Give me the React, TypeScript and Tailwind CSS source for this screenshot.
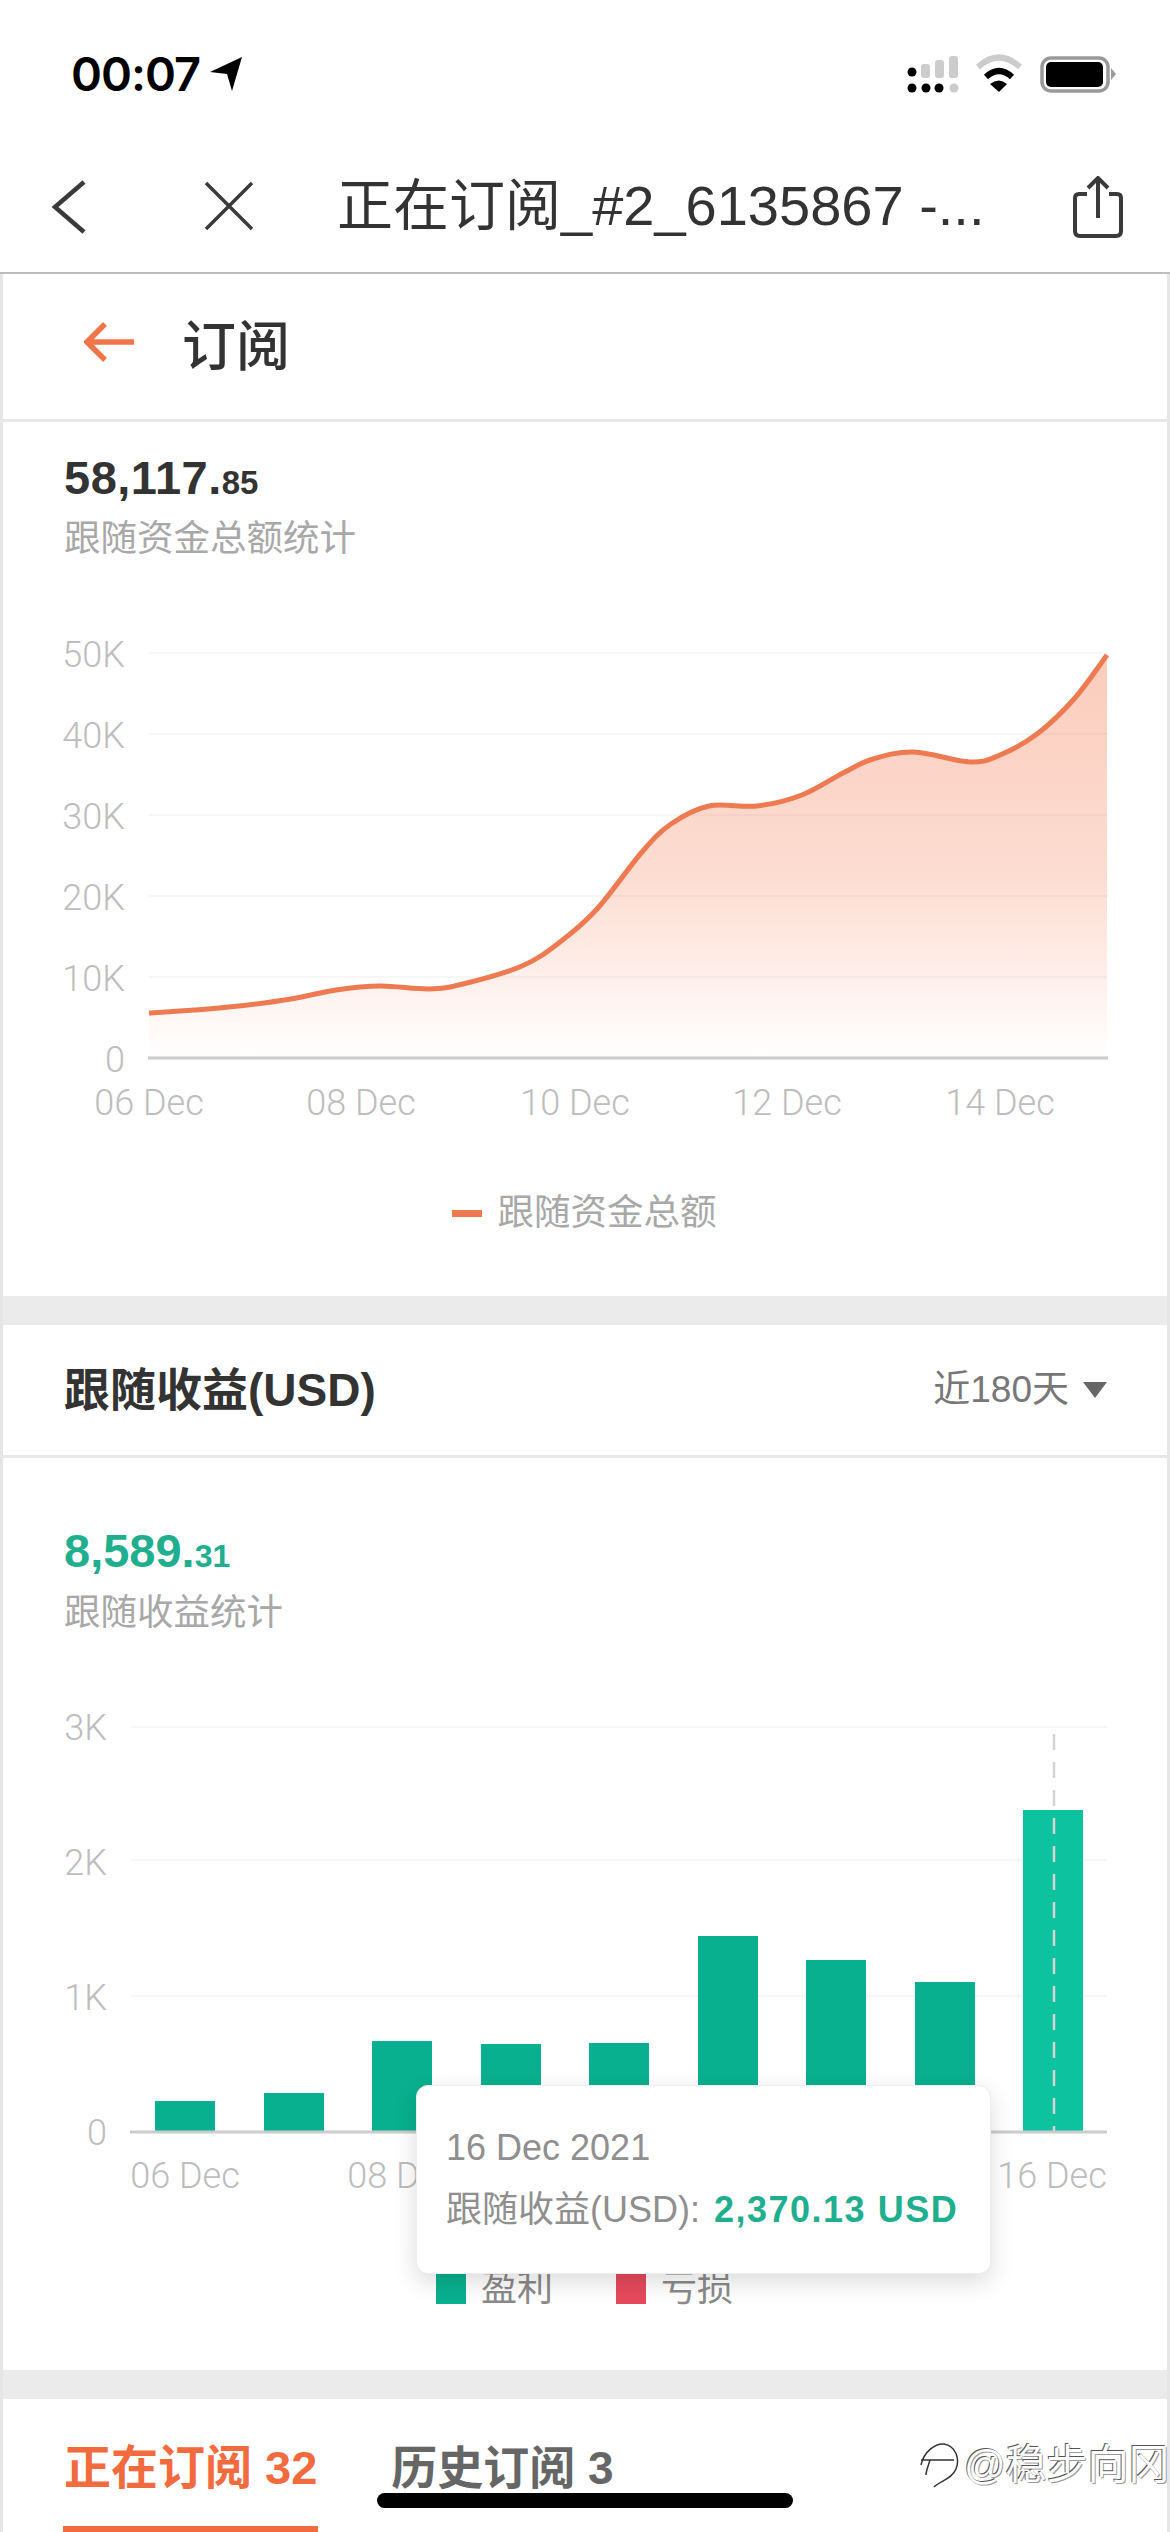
const sans = "font-['Liberation_Sans','Noto_Sans_CJK_SC',sans-serif]"

// curve points of the first chart, in page pixels
const curve: [number, number][] = [
  [149, 1012], [194, 1009], [239, 1005], [291, 998], [336, 989], [380, 985], [429, 988], [463, 983],
  [522, 965], [560, 941], [597, 908], [642, 851], [671, 823], [709, 805], [757, 805],
  [802, 794], [843, 772], [873, 758], [914, 751], [970, 761], [1000, 754], [1037, 733], [1074, 698], [1107, 654],
]

function smooth(pts: [number, number][]) {
  let d = `M${pts[0][0]} ${pts[0][1]}`
  for (let i = 0; i < pts.length - 1; i++) {
    const p0 = pts[i - 1] || pts[i]
    const p1 = pts[i]
    const p2 = pts[i + 1]
    const p3 = pts[i + 2] || p2
    const c1x = p1[0] + (p2[0] - p0[0]) / 6
    const c1y = p1[1] + (p2[1] - p0[1]) / 6
    const c2x = p2[0] - (p3[0] - p1[0]) / 6
    const c2y = p2[1] - (p3[1] - p1[1]) / 6
    d += ` C${c1x} ${c1y} ${c2x} ${c2y} ${p2[0]} ${p2[1]}`
  }
  return d
}

const linePath = smooth(curve)
const axisFont = { fontFamily: 'Roboto, sans-serif', fontWeight: 300, fontSize: 36, fill: '#bdbdbd' }

const bars = [
  { x: 155, top: 2101 },
  { x: 264, top: 2093 },
  { x: 372, top: 2041 },
  { x: 481, top: 2044 },
  { x: 589, top: 2043 },
  { x: 698, top: 1936 },
  { x: 806, top: 1960 },
  { x: 915, top: 1982 },
]

function StatusIcons() {
  return (
    <svg width="210" height="40" viewBox="906 54 210 40">
      <circle cx="912" cy="72" r="4.5" fill="#000" />
      <rect x="921" y="64" width="9" height="14" rx="3" fill="#ccc" />
      <rect x="935" y="60" width="9" height="18" rx="3" fill="#ccc" />
      <rect x="949" y="56" width="9" height="22" rx="3" fill="#ccc" />
      <circle cx="912" cy="88" r="4.5" fill="#000" />
      <circle cx="926" cy="88" r="4.5" fill="#000" />
      <circle cx="939" cy="88" r="4.5" fill="#000" />
      <circle cx="954" cy="88" r="4.5" fill="#ccc" />
      <path d="M978 67 Q999 48 1020 67" fill="none" stroke="#ccc" strokeWidth="6" />
      <path d="M986 77 Q999 65 1012 77" fill="none" stroke="#000" strokeWidth="6" />
      <path d="M990 84 Q999 77 1007 84 L999 92 Z" fill="#000" />
      <rect x="1042" y="58" width="66" height="33" rx="9" fill="none" stroke="#999" strokeWidth="3.5" />
      <rect x="1046" y="62" width="57" height="25" rx="5" fill="#000" />
      <path d="M1111 68 L1116 74 L1111 80 Z" fill="#999" />
    </svg>
  )
}

function FundChart() {
  return (
    <svg className="block" width="1164" height="540" viewBox="3 620 1164 540">
      <defs>
        <linearGradient id="fundFill" x1="0" y1="654" x2="0" y2="1057" gradientUnits="userSpaceOnUse">
          <stop offset="0" stopColor="#f47a50" stopOpacity="0.38" />
          <stop offset="0.55" stopColor="#f47a50" stopOpacity="0.26" />
          <stop offset="1" stopColor="#f47a50" stopOpacity="0" />
        </linearGradient>
      </defs>
      {[652, 733, 814, 895, 976].map((y) => (
        <line key={y} x1="149" x2="1107" y1={y} y2={y} stroke="#f6f6f6" strokeWidth="2" />
      ))}
      <path d={`${linePath} L1107 1057 L149 1057 Z`} fill="url(#fundFill)" />
      <path d={linePath} fill="none" stroke="#ee7a52" strokeWidth="5" />
      <line x1="148" x2="1108" y1="1057" y2="1057" stroke="#cccccc" strokeWidth="3" />
      {['50K', '40K', '30K', '20K', '10K', '0'].map((t, i) => (
        <text key={t} x="125" y={666 + i * 81} textAnchor="end" {...axisFont}>{t}</text>
      ))}
      {[['06 Dec', 149], ['08 Dec', 361], ['10 Dec', 575], ['12 Dec', 787], ['14 Dec', 1000]].map(([t, x]) => (
        <text key={t} x={x} y="1114" textAnchor="middle" {...axisFont}>{t}</text>
      ))}
    </svg>
  )
}

function ProfitChart() {
  return (
    <svg className="block" width="1164" height="540" viewBox="3 1690 1164 540">
      {[1727, 1860, 1996].map((y) => (
        <line key={y} x1="131" x2="1107" y1={y} y2={y} stroke="#f6f6f6" strokeWidth="2" />
      ))}
      {bars.map((b) => (
        <rect key={b.x} x={b.x} y={b.top} width="60" height={2131 - b.top} fill="#09b08f" />
      ))}
      <rect x="1023" y="1810" width="60" height="321" fill="#0cc29f" />
      <line x1="130" x2="1107" y1="2132" y2="2132" stroke="#cccccc" strokeWidth="3" />
      <line x1="1054" x2="1054" y1="1734" y2="2131" stroke="#d4d4d4" strokeWidth="2.5" strokeDasharray="16 12" />
      {['3K', '2K', '1K', '0'].map((t, i) => (
        <text key={t} x="107" y={1740 + i * 135} textAnchor="end" {...axisFont}>{t}</text>
      ))}
      {[['06 Dec', 185], ['08 Dec', 402], ['16 Dec', 1052]].map(([t, x]) => (
        <text key={t} x={x} y="2188" textAnchor="middle" {...axisFont}>{t}</text>
      ))}
    </svg>
  )
}

export default function App() {
  return (
    <div className={`relative h-[2532px] w-[1170px] overflow-hidden bg-white ${sans}`}>
      {/* Status bar */}
      <div className="flex h-[146px] items-start justify-between pl-[71px] pr-[54px] pt-[49px]">
        <div className="flex items-center gap-[10px]">
          <span className="font-['Inter',sans-serif] text-[47px] font-semibold leading-[50px] tracking-[-1px] text-black">00:07</span>
          <svg width="32" height="34" viewBox="0 0 32 34">
            <path d="M32 0 L22 34 L17 17 L0 15 Z" fill="#000" />
          </svg>
        </div>
        <div className="pt-[5px]">
          <StatusIcons />
        </div>
      </div>

      {/* Browser nav */}
      <div className="flex h-[128px] items-start border-b-2 border-[#bdbdbd] pl-[51px] pr-[47px] pt-[30px]">
        <svg width="36" height="56" viewBox="0 0 36 56" className="mt-[3px]">
          <path d="M33 3 L4 28 L33 53" fill="none" stroke="#3a3a3a" strokeWidth="4.5" />
        </svg>
        <svg width="52" height="50" viewBox="0 0 52 50" className="ml-[116px] mt-[5px]">
          <path d="M3 2 L49 48 M49 2 L3 48" fill="none" stroke="#3a3a3a" strokeWidth="3.5" />
        </svg>
        <div className="ml-[82px] whitespace-nowrap text-[56px] leading-[60px] text-[#333]">正在订阅_#2_6135867 -...</div>
        <svg width="50" height="62" viewBox="0 0 50 62" className="ml-auto">
          <path d="M14 18 H6 Q2 18 2 22 V55 Q2 60 7 60 H43 Q48 60 48 55 V22 Q48 18 44 18 H36 M25 42 V3 M15 12 L25 2 L35 12" fill="none" stroke="#3a3a3a" strokeWidth="4" />
        </svg>
      </div>

      <div className="border-x-[3px] border-[#e6e6e6]">
        {/* Page header */}
        <div className="flex h-[148px] items-center gap-[48px] border-b-[3px] border-[#e8e8e8] pl-[81px]">
          <svg width="50" height="40" viewBox="0 0 50 40" className="mb-[10px]">
            <path d="M50 20 H4 M21 2 L3 20 L21 38" fill="none" stroke="#f0764a" strokeWidth="5.5" />
          </svg>
          <span className="text-[54px] font-medium leading-[60px] text-[#333]">订阅</span>
        </div>

        {/* Fund total */}
        <div className="h-[874px]">
          <div className="pl-[61px] pt-[30px]">
            <div className="text-[47px] font-bold leading-[52px] tracking-[0.5px] text-[#333]">
              58,117.<span className="text-[33px] tracking-[0px]">85</span>
            </div>
            <div className="mt-[5px] text-[36.5px] leading-[50px] text-[#a8a8a8]">跟随资金总额统计</div>
          </div>
          <div className="mt-[57px]">
            <FundChart />
          </div>
          <div className="mt-[30px] flex items-center justify-center gap-[16px] pr-[2px]">
            <span className="h-[7px] w-[30px] bg-[#ee7a52]" />
            <span className="text-[36.5px] leading-[44px] text-[#a8a8a8]">跟随资金总额</span>
          </div>
        </div>

        <div className="h-[29px] bg-[#ebebeb]" />

        {/* Followers profit */}
        <div className="flex h-[133px] items-center justify-between border-b-[3px] border-[#e8e8e8] pl-[61px] pr-[60px]">
          <span className="text-[46px] font-bold leading-[60px] text-[#333]">跟随收益(USD)</span>
          <span className="flex items-center gap-[14px]">
            <span className="text-[37px] leading-[44px] text-[#777]">近180天</span>
            <svg width="24" height="16" viewBox="0 0 24 16">
              <path d="M0 0 H24 L12 16 Z" fill="#666" />
            </svg>
          </span>
        </div>

        <div className="relative h-[912px]">
          <div className="pl-[61px] pt-[67px]">
            <div className="text-[47px] font-bold leading-[52px] text-[#1fae8e]">
              8,589.<span className="text-[32px]">31</span>
            </div>
            <div className="mt-[6px] text-[36.5px] leading-[50px] text-[#a8a8a8]">跟随收益统计</div>
          </div>
          <div className="mt-[52px]">
            <ProfitChart />
          </div>
          <div className="mt-[37px] flex items-center gap-[15px] pl-[433px]">
            <span className="h-[30px] w-[30px] bg-[#09b08f]" />
            <span className="text-[36px] leading-[44px] text-[#8a8a8a]">盈利</span>
            <span className="ml-[48px] h-[30px] w-[30px] bg-[#e54a5c]" />
            <span className="text-[36px] leading-[44px] text-[#8a8a8a]">亏损</span>
          </div>

          {/* Tooltip */}
          <div className="absolute left-[413px] top-[627px] h-[189px] w-[575px] rounded-[12px] border border-[#eeeeee] bg-white pl-[29px] pt-[40px] shadow-[0_8px_24px_rgba(0,0,0,0.14)]">
            <div className="text-[36px] leading-[44px] text-[#8f8f8f]">16 Dec 2021</div>
            <div className="mt-[18px] flex items-center text-[36px] leading-[44px] text-[#8f8f8f]">
              跟随收益(USD):
              <span className="ml-[14px] font-bold tracking-[1.5px] text-[#1fae8e]">2,370.13 USD</span>
            </div>
          </div>
        </div>

        <div className="h-[29px] bg-[#ebebeb]" />

        {/* Tabs */}
        <div className="flex h-[133px] items-start gap-[74px] pl-[61px] pt-[39px] text-[47px] font-bold leading-[60px]">
          <span className="relative text-[#f26b3f]">
            正在订阅 32
            <span className="absolute left-[-1px] top-[88px] h-[7px] w-[255px] bg-[#f26b3f]" />
          </span>
          <span className="text-[46px] text-[#666]">历史订阅 3</span>
        </div>
      </div>

      {/* Home indicator */}
      <div className="absolute left-[377px] top-[2493px] h-[15px] w-[416px] rounded-full bg-black" />

      {/* Watermark */}
      <div className="absolute left-[918px] top-[2440px] flex items-center gap-[2px] whitespace-nowrap">
        <svg width="44" height="48" viewBox="0 0 44 48">
          <path d="M3 24 C6 10 18 2 26 3 C38 5 42 18 38 28 C34 38 22 40 16 46 M3 19 H36 M12 19 C10 26 8 30 8 34" fill="none" stroke="#333" strokeWidth="1.5" />
        </svg>
        <span className="text-[41px] leading-[50px] text-white [text-shadow:-1px_-1px_0_#555,1px_1px_0_#999]">@稳步向冈</span>
      </div>
    </div>
  )
}
